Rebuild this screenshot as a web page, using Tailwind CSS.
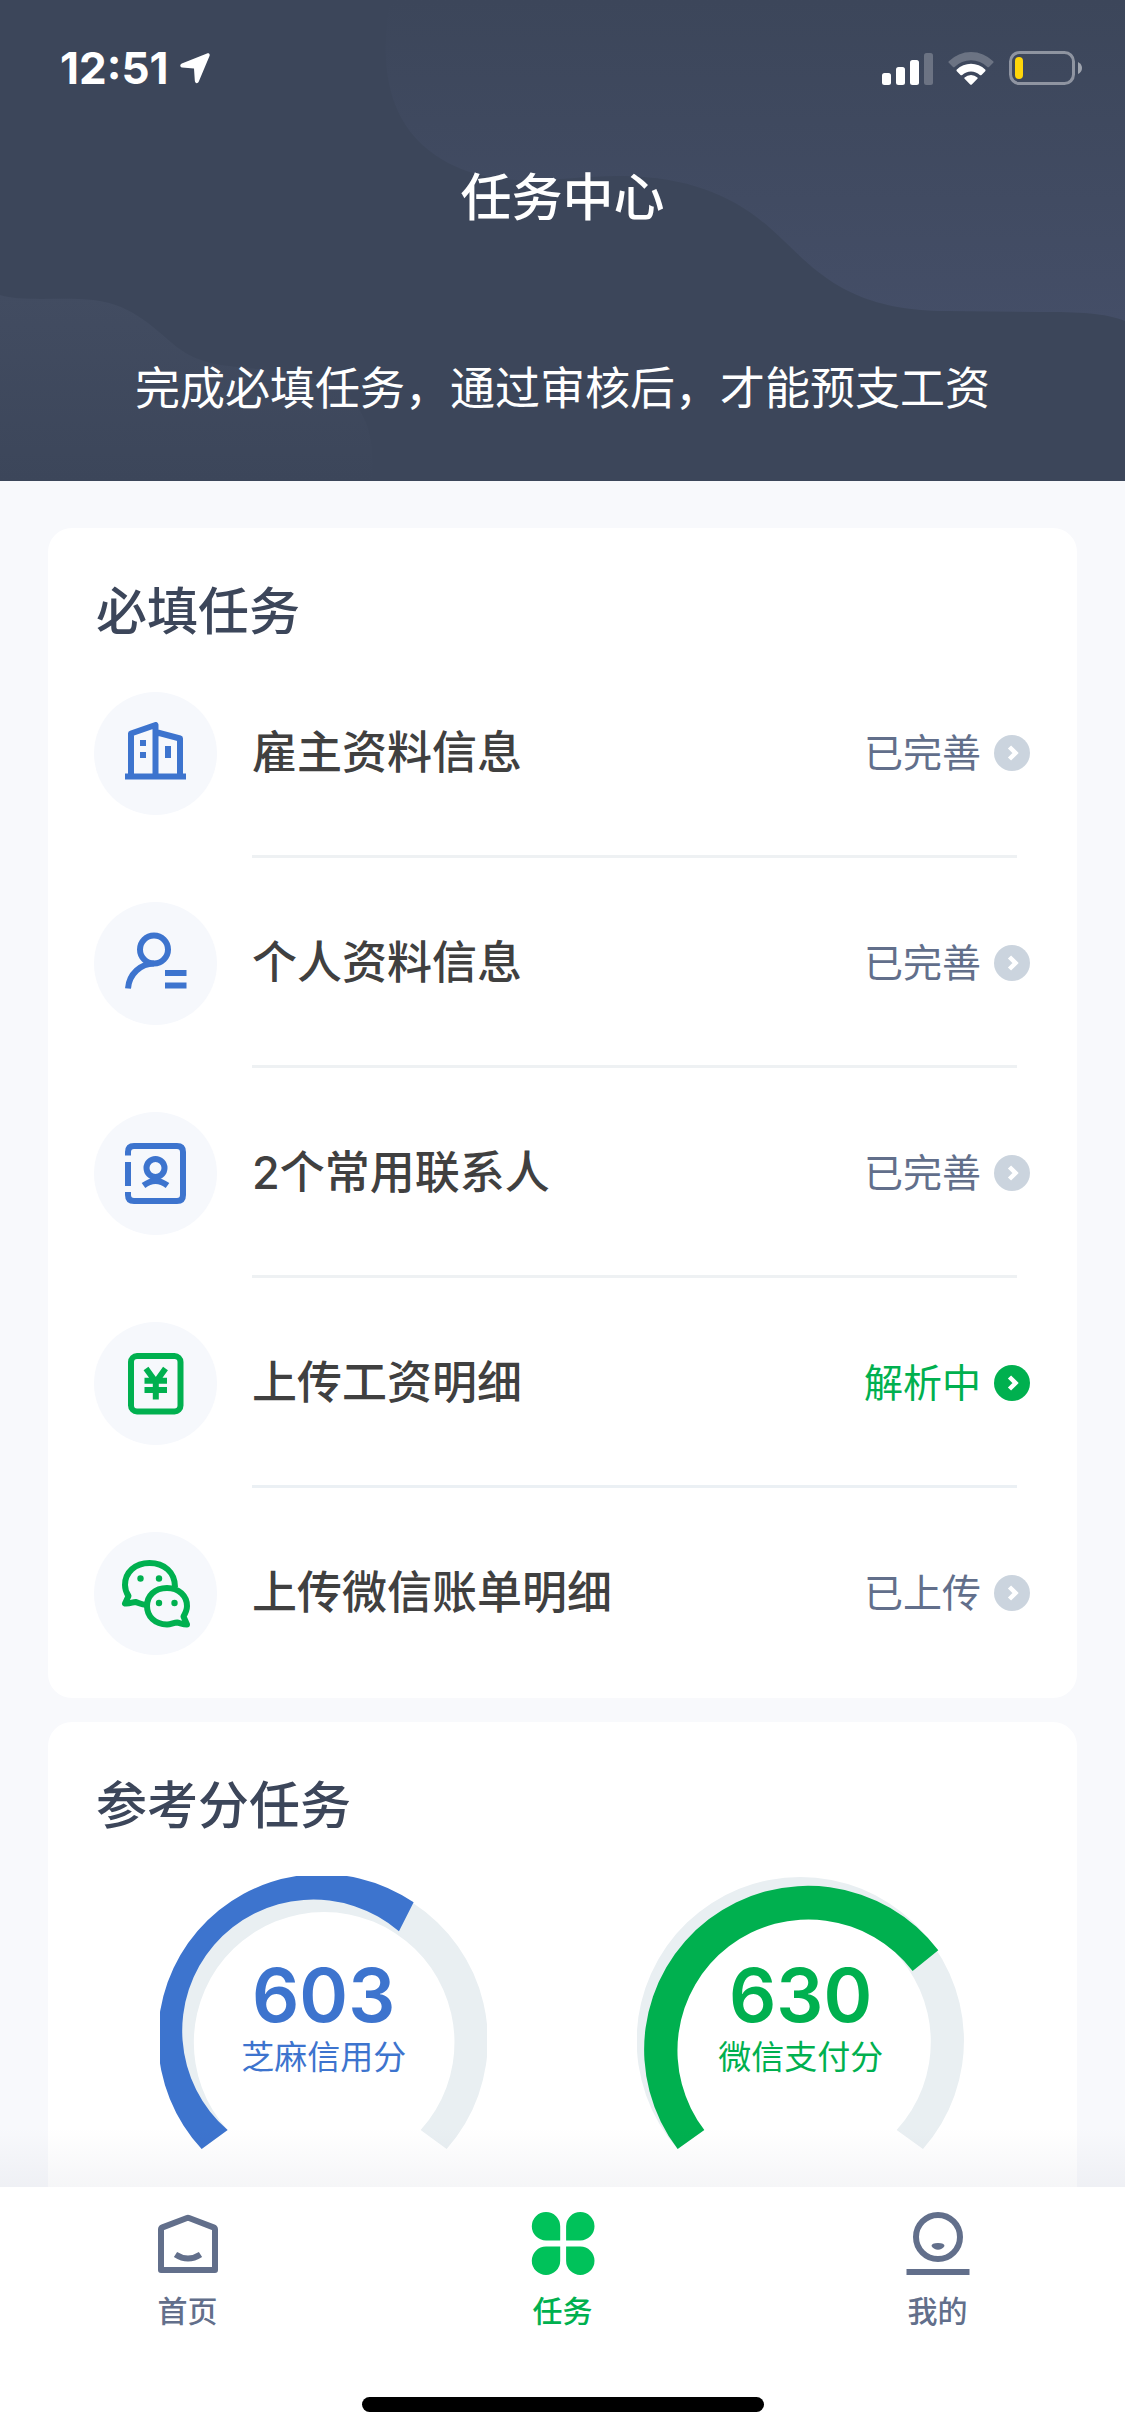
<!DOCTYPE html>
<html lang="zh-CN">
<head>
<meta charset="utf-8">
<title>任务中心</title>
<script src="https://cdn.jsdelivr.net/npm/@tailwindcss/browser@4"></script>
</head>
<body class="w-[1125px] h-[2436px] overflow-hidden bg-[#f8f9fc] font-['Inter','Noto_Sans_CJK_SC',sans-serif] text-[#404040]">
<div class="relative flex h-[2436px] flex-col">

  <header class="relative h-[481px] shrink-0 bg-[#3c465a] text-white">
    <svg class="absolute inset-0" width="1125" height="481" viewBox="0 0 1125 481">
      <defs>
        <linearGradient id="g1" x1="0" y1="0" x2="0" y2="1"><stop offset="0" stop-color="#3c465a"/><stop offset="1" stop-color="#444e67"/></linearGradient>
        <linearGradient id="g2" x1="0" y1="0" x2="0" y2="1"><stop offset="0" stop-color="#424c61"/><stop offset="1" stop-color="#3c465a"/></linearGradient>
      </defs>
      <path fill="url(#g1)" d="M390 0C378 70 386 145 473 173C520 188 570 175 624 176C690 177 735 197 770 228C810 263 840 311 947 311L1040 312C1080 312 1105 313 1125 321V0Z"/>
      <path fill="url(#g2)" d="M0 295C20 301 50 298 79 299C125 300 145 320 172 343C198 366 225 366 270 370C350 378 378 410 372 481H0Z"/>
    </svg>
    <div class="relative flex h-[136px] items-center justify-between pl-[60px] pr-[43px]">
      <div class="flex items-center gap-[12px]">
        <span class="text-[44px] leading-[50px] font-bold">12:51</span>
        <svg width="30" height="31" viewBox="0 0 30 31" fill="#fff"><path d="M27 .5 1.8 10.6C-.3 11.600-.2 14 2 14.400L14 15.500 14.800 27.500C15.100 30.800 17.700 31 18.800 28.500L29.500 3C30.200 1 29-.2 27 .5Z"/></svg>
      </div>
      <div class="flex items-center gap-[15px]">
        <svg width="51" height="33" viewBox="0 0 51 33" fill="#fff"><rect y="21" width="9" height="12" rx="2.500"/><rect x="14" y="15" width="9" height="18" rx="2.500"/><rect x="28" y="8" width="9" height="25" rx="2.500"/><rect x="42" y="1" width="9" height="32" rx="2.500" fill-opacity=".24"/></svg>
        <svg width="46" height="33" viewBox="0 0 46 33" fill="#fff"><path fill-opacity=".24" d="M.8 9.200A31.500 31.500 0 0 1 45.200 9.200Q46 10 45.200 10.800L41 15Q40.200 15.700 39.400 15A23.500 23.500 0 0 0 6.600 15Q5.800 15.700 5 15L.8 10.800Q0 10 .8 9.200Z"/><path d="M8.800 17.600A20.300 20.300 0 0 1 37.200 17.600Q38 18.400 37.200 19.200L33.500 22.900Q32.600 23.600 31.800 22.900A12.800 12.800 0 0 0 14.200 22.900Q13.400 23.600 12.500 22.900L8.800 19.200Q8 18.400 8.800 17.600Z"/><path d="M16.600 25.500A9.300 9.300 0 0 1 29.400 25.500Q30 26.200 29.400 26.800L23.800 32.500Q23 33.200 22.200 32.500L16.600 26.800Q16 26.200 16.600 25.500Z"/></svg>
        <svg width="73" height="34" viewBox="0 0 73 34"><rect x="1.500" y="1.500" width="63" height="31" rx="9" fill="none" stroke="#fff" stroke-opacity=".42" stroke-width="3"/><path d="M69 11Q73 13 73 17T69 23Z" fill="#fff" fill-opacity=".5"/><rect x="6" y="6" width="8" height="22" rx="4" fill="#ffd60a"/></svg>
      </div>
    </div>
    <h1 class="relative pt-[32px] text-center text-[51px] leading-[60px] font-medium">任务中心</h1>
    <p class="relative pt-[131px] text-center text-[45px] leading-[60px] font-normal">完成必填任务，通过审核后，才能预支工资</p>
  </header>

  <main class="flex flex-1 flex-col gap-[24px] px-[48px] pt-[47px]">
    <section class="h-[1170px] shrink-0 rounded-[24px] bg-white pt-[54px]">
      <h2 class="mb-[6px] pl-[48px] text-[51px] leading-[60px] font-medium text-[#3c465a]">必填任务</h2>

      <div class="flex h-[210px] flex-col">
        <div class="flex flex-1 items-center pt-[3px] pl-[46px] pr-[47px]">
          <div class="flex size-[123px] items-center justify-center rounded-full bg-[#f6f8fc]">
            <svg width="63" height="63" viewBox="0 0 63 63" fill="none" stroke="#3d74ce" stroke-width="6"><path d="M1 54.500H62"/><path stroke-linejoin="round" d="M7 54V11.500L31.500 3V54M31.500 10 56 16.500V54"/><path stroke="none" fill="#3d74ce" d="M16 18h6v6h-6zM16 30h6v6h-6zM41 24h6v12h-6z"/></svg>
          </div>
          <span class="ml-[35px] flex-1 text-[45px] leading-[60px] font-medium">雇主资料信息</span>
          <span class="text-[39px] leading-[60px] font-normal text-[#626f8b]">已完善</span>
          <svg class="ml-[13px]" width="36" height="36" viewBox="0 0 36 36"><circle cx="18" cy="18" r="18" fill="#cbd4de"/><path d="M15.500 12 21.500 18 15.500 24" fill="none" stroke="#fff" stroke-width="4.500"/></svg>
        </div>
        <div class="ml-[204px] mr-[60px] h-[3px] bg-[#eef1f3]"></div>
      </div>

      <div class="flex h-[210px] flex-col">
        <div class="flex flex-1 items-center pt-[3px] pl-[46px] pr-[47px]">
          <div class="flex size-[123px] items-center justify-center rounded-full bg-[#f6f8fc]">
            <svg width="63" height="63" viewBox="0 0 63 63" fill="none" stroke="#3d74ce" stroke-width="6"><circle cx="30" cy="17.500" r="14"/><path d="M4 56.500C5 42 17 31.500 30 31.500M41 41H62.500M41 53.500H62.500"/></svg>
          </div>
          <span class="ml-[35px] flex-1 text-[45px] leading-[60px] font-medium">个人资料信息</span>
          <span class="text-[39px] leading-[60px] font-normal text-[#626f8b]">已完善</span>
          <svg class="ml-[13px]" width="36" height="36" viewBox="0 0 36 36"><circle cx="18" cy="18" r="18" fill="#cbd4de"/><path d="M15.500 12 21.500 18 15.500 24" fill="none" stroke="#fff" stroke-width="4.500"/></svg>
        </div>
        <div class="ml-[204px] mr-[60px] h-[3px] bg-[#eef1f3]"></div>
      </div>

      <div class="flex h-[210px] flex-col">
        <div class="flex flex-1 items-center pt-[3px] pl-[46px] pr-[47px]">
          <div class="flex size-[123px] items-center justify-center rounded-full bg-[#f6f8fc]">
            <svg width="63" height="63" viewBox="0 0 63 63" fill="none" stroke="#3d74ce" stroke-width="6"><path d="M4 13.500V10Q4 4 10 4H53Q59 4 59 10V53Q59 59 53 59H10Q4 59 4 53V50M4 20V44"/><circle cx="31.500" cy="26" r="9"/><path d="M19.500 43.500Q31.500 34.500 43.500 43.500"/></svg>
          </div>
          <span class="ml-[35px] flex-1 text-[45px] leading-[60px] font-medium">2个常用联系人</span>
          <span class="text-[39px] leading-[60px] font-normal text-[#626f8b]">已完善</span>
          <svg class="ml-[13px]" width="36" height="36" viewBox="0 0 36 36"><circle cx="18" cy="18" r="18" fill="#cbd4de"/><path d="M15.500 12 21.500 18 15.500 24" fill="none" stroke="#fff" stroke-width="4.500"/></svg>
        </div>
        <div class="ml-[204px] mr-[60px] h-[3px] bg-[#eef1f3]"></div>
      </div>

      <div class="flex h-[210px] flex-col">
        <div class="flex flex-1 items-center pt-[3px] pl-[46px] pr-[47px]">
          <div class="flex size-[123px] items-center justify-center rounded-full bg-[#f6f8fc]">
            <svg width="63" height="63" viewBox="0 0 63 63" fill="none" stroke="#00b04f" stroke-width="6"><rect x="7" y="4" width="49.500" height="55.500" rx="6"/><path d="M22 16.500 31.800 30 41.500 16.500M31.800 28V47.500M20.500 28.700H43M20.500 38H43"/></svg>
          </div>
          <span class="ml-[35px] flex-1 text-[45px] leading-[60px] font-medium">上传工资明细</span>
          <span class="text-[39px] leading-[60px] font-normal text-[#00b04f]">解析中</span>
          <svg class="ml-[13px]" width="36" height="36" viewBox="0 0 36 36"><circle cx="18" cy="18" r="18" fill="#00b04f"/><path d="M15.500 12 21.500 18 15.500 24" fill="none" stroke="#fff" stroke-width="4.500"/></svg>
        </div>
        <div class="ml-[204px] mr-[60px] h-[3px] bg-[#ebf0f4]"></div>
      </div>

      <div class="flex h-[210px] flex-col">
        <div class="flex flex-1 items-center pl-[46px] pr-[47px]">
          <div class="flex size-[123px] items-center justify-center rounded-full bg-[#f6f8fc]">
            <svg width="69" height="69" viewBox="0 0 69 69" fill="none" stroke="#00b04f" stroke-width="6" stroke-linejoin="round"><path d="M54 28C54 13 43 4 28.500 4C14 4 4 13.500 4 26C4 31 5.500 34 7.500 37L4 44.500C9 45 11.500 43 14.500 43C18 44 20 46 26 46"/><path d="M46 29C33.500 29 26 37 26 47C26 57.500 34 65.500 46 65.500C50 65.500 53 63.500 56 63.500C59 64 62 65.500 66 65.500L62.500 57.500C64.500 54 66 51 66 47C66 37 58 29 46 29Z"/><g fill="#00b04f" stroke="none"><circle cx="19.500" cy="19.500" r="3.200"/><circle cx="38" cy="19.500" r="3.200"/><circle cx="38" cy="44" r="3.200"/><circle cx="53.500" cy="44" r="3.200"/></g></svg>
          </div>
          <span class="ml-[35px] flex-1 text-[45px] leading-[60px] font-medium">上传微信账单明细</span>
          <span class="text-[39px] leading-[60px] font-normal text-[#626f8b]">已上传</span>
          <svg class="ml-[13px]" width="36" height="36" viewBox="0 0 36 36"><circle cx="18" cy="18" r="18" fill="#cbd4de"/><path d="M15.500 12 21.500 18 15.500 24" fill="none" stroke="#fff" stroke-width="4.500"/></svg>
        </div>
      </div>
    </section>

    <section class="flex-1 rounded-t-[24px] bg-white pt-[54px]">
      <h2 class="pl-[48px] text-[51px] leading-[60px] font-medium text-[#3c465a]">参考分任务</h2>
      <div class="flex gap-[150px] pt-[40px] pl-[112px]">
        <div class="grid w-[327px] justify-items-center text-[#3d74ce]">
          <svg class="col-start-1 row-start-1" width="327.300" height="273.700" viewBox="0 0 982 821">
            <path fill="#e9eff2" d="M125 819A491 491 0 1 1 860 819L782 762A391 391 0 1 0 203 762Z"/>
            <path fill="currentColor" d="M125 819A491 491 0 0 1 761 79L717 166A391 391 0 0 0 203 762Z"/>
          </svg>
          <div class="col-start-1 row-start-1 flex flex-col items-center pt-[79px]">
            <span class="text-[74px] leading-[80px] font-semibold">603</span>
            <span class="mt-[2px] text-[33px] leading-[40px] font-normal">芝麻信用分</span>
          </div>
        </div>
        <div class="grid w-[327px] justify-items-center text-[#00b04f]">
          <svg class="col-start-1 row-start-1" width="327.300" height="273.700" viewBox="0 0 982 821">
            <path fill="#e9eff2" d="M122 819A491 491 0 1 1 858 819L779 762A391 391 0 1 0 202 762Z"/>
            <path fill="currentColor" d="M122 819A491 491 0 0 1 904 223L827 285A391 391 0 0 0 202 762Z"/>
          </svg>
          <div class="col-start-1 row-start-1 flex flex-col items-center pt-[79px]">
            <span class="text-[74px] leading-[80px] font-semibold">630</span>
            <span class="mt-[2px] text-[33px] leading-[40px] font-normal">微信支付分</span>
          </div>
        </div>
      </div>
    </section>
  </main>

  <div class="pointer-events-none absolute inset-x-0 bottom-[249px] h-[60px] bg-linear-to-b from-[#20285000] to-[#2028500b]"></div>

  <nav class="relative flex h-[249px] shrink-0 flex-col items-center bg-white">
    <div class="grid h-[210px] w-full grid-cols-3 text-center text-[30px] leading-[40px] font-medium text-[#626f8b]">
      <div class="flex flex-col items-center pt-[25px]">
        <svg width="64" height="64" viewBox="0 0 64 64" fill="none" stroke="currentColor" stroke-width="6"><path stroke-linejoin="round" d="M5 17.500Q5 16 6.500 15.400L31 6Q32 5.600 33 6L57.500 15.400Q59 16 59 17.500V58H5Z"/><path d="M19.500 42.500Q32 50.500 44.500 42.500"/></svg>
        <span class="mt-[15px]">首页</span>
      </div>
      <div class="flex flex-col items-center pt-[25px] text-[#00b04f]">
        <svg width="64" height="64" viewBox="0 0 64 64" fill="#00c25a"><path d="M15 0A14.200 14.200 0 0 1 29.200 14.200V28.400H15A14.200 14.200 0 0 1 15 0ZM49.300 0A14.200 14.200 0 0 1 49.300 28.400H35.100V14.200A14.200 14.200 0 0 1 49.300 0ZM15 34.600H29.200V48.800A14.200 14.200 0 1 1 15 34.600ZM35.100 34.600H49.300A14.200 14.200 0 1 1 35.100 48.800Z"/></svg>
        <span class="mt-[15px]">任务</span>
      </div>
      <div class="flex flex-col items-center pt-[25px]">
        <svg width="64" height="64" viewBox="0 0 64 64" fill="none" stroke="currentColor" stroke-width="6"><circle cx="32" cy="25" r="22"/><path d="M.5 60H63.500"/><path fill="currentColor" stroke="none" d="M25.500 34Q25.500 31 32 31T38.500 34Q36 37.800 32 37.800T25.500 34Z"/></svg>
        <span class="mt-[15px]">我的</span>
      </div>
    </div>
    <div class="h-[15px] w-[402px] rounded-full bg-black"></div>
  </nav>
</div>
</body>
</html>
